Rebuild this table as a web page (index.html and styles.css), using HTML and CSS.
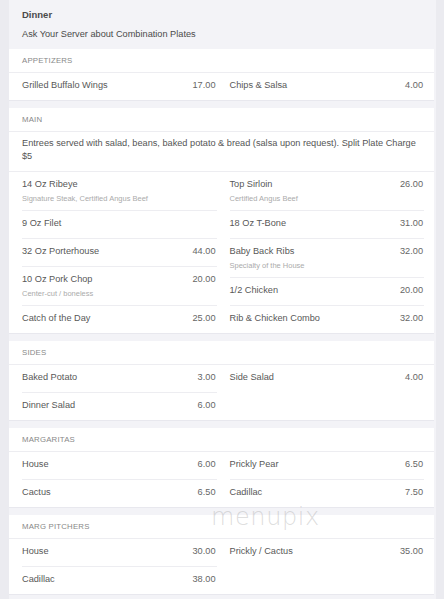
FILE: index.html
```html
<!DOCTYPE html>
<html lang="en">
<head>
  <meta charset="UTF-8" />
  <meta name="viewport" content="width=device-width, initial-scale=1.0"/>
  <title>Dinner Menu</title>
  <link rel="stylesheet" href="styles.css">
</head>
<body>
  <div class="menu">
    <header class="menu-head">
      <h1>Dinner</h1>
      <p>Ask Your Server about Combination Plates</p>
    </header>

    <section class="group">
      <h2>Appetizers</h2>
      <div class="items">
        <ul class="col">
          <li class="item"><div class="item-row"><span>Grilled Buffalo Wings</span><span class="price">17.00</span></div></li>
        </ul>
        <ul class="col">
          <li class="item"><div class="item-row"><span>Chips &amp; Salsa</span><span class="price">4.00</span></div></li>
        </ul>
      </div>
    </section>

    <section class="group">
      <h2>Main</h2>
      <p class="note">Entrees served with salad, beans, baked potato &amp; bread (salsa upon request). Split Plate Charge $5</p>
      <div class="items">
        <ul class="col">
          <li class="item">
            <div class="item-row"><span>14 Oz Ribeye</span><span class="price"></span></div>
            <div class="desc">Signature Steak, Certified Angus Beef</div>
          </li>
          <li class="item"><div class="item-row"><span>9 Oz Filet</span><span class="price"></span></div></li>
          <li class="item"><div class="item-row"><span>32 Oz Porterhouse</span><span class="price">44.00</span></div></li>
          <li class="item">
            <div class="item-row"><span>10 Oz Pork Chop</span><span class="price">20.00</span></div>
            <div class="desc">Center-cut / boneless</div>
          </li>
          <li class="item"><div class="item-row"><span>Catch of the Day</span><span class="price">25.00</span></div></li>
        </ul>
        <ul class="col">
          <li class="item">
            <div class="item-row"><span>Top Sirloin</span><span class="price">26.00</span></div>
            <div class="desc">Certified Angus Beef</div>
          </li>
          <li class="item"><div class="item-row"><span>18 Oz T-Bone</span><span class="price">31.00</span></div></li>
          <li class="item">
            <div class="item-row"><span>Baby Back Ribs</span><span class="price">32.00</span></div>
            <div class="desc">Specialty of the House</div>
          </li>
          <li class="item"><div class="item-row"><span>1/2 Chicken</span><span class="price">20.00</span></div></li>
          <li class="item"><div class="item-row"><span>Rib &amp; Chicken Combo</span><span class="price">32.00</span></div></li>
        </ul>
      </div>
    </section>

    <section class="group">
      <h2>Sides</h2>
      <div class="items">
        <ul class="col">
          <li class="item"><div class="item-row"><span>Baked Potato</span><span class="price">3.00</span></div></li>
          <li class="item"><div class="item-row"><span>Dinner Salad</span><span class="price">6.00</span></div></li>
        </ul>
        <ul class="col">
          <li class="item"><div class="item-row"><span>Side Salad</span><span class="price">4.00</span></div></li>
        </ul>
      </div>
    </section>

    <section class="group">
      <h2>Margaritas</h2>
      <div class="items">
        <ul class="col">
          <li class="item"><div class="item-row"><span>House</span><span class="price">6.00</span></div></li>
          <li class="item"><div class="item-row"><span>Cactus</span><span class="price">6.50</span></div></li>
        </ul>
        <ul class="col">
          <li class="item"><div class="item-row"><span>Prickly Pear</span><span class="price">6.50</span></div></li>
          <li class="item"><div class="item-row"><span>Cadillac</span><span class="price">7.50</span></div></li>
        </ul>
      </div>
    </section>

    <section class="group">
      <h2>Marg Pitchers</h2>
      <div class="items">
        <ul class="col">
          <li class="item"><div class="item-row"><span>House</span><span class="price">30.00</span></div></li>
          <li class="item"><div class="item-row"><span>Cadillac</span><span class="price">38.00</span></div></li>
        </ul>
        <ul class="col">
          <li class="item"><div class="item-row"><span>Prickly / Cactus</span><span class="price">35.00</span></div></li>
        </ul>
      </div>
    </section>

    <div class="watermark">menupix</div>
  </div>
</body>
</html>
```

FILE: styles.css
```css
body {
  margin: 0;
  background: #ebebf0;
  font-family: "Liberation Sans", Arial, sans-serif;
}

.menu {
  position: relative;
  margin: 0 8px 0 9px;
  min-height: 599px;
  background: #f3f3f7;
  overflow: hidden;
}

.menu-head {
  padding: 9px 13px 9px;
}

.menu-head h1 {
  margin: 0;
  font-size: 9.5px;
  line-height: 12px;
  font-weight: bold;
  color: #4a4a4a;
}

.menu-head p {
  margin: 7px 0 0;
  font-size: 9.2px;
  line-height: 12px;
  color: #4a4a4a;
}

.group {
  background: #fff;
  margin-right: 2px;
  margin-bottom: 7px;
  border-bottom: 1px solid #e8e8ee;
}

.group h2 {
  margin: 0;
  padding: 6px 13px;
  font-size: 7.8px;
  line-height: 11px;
  font-weight: normal;
  letter-spacing: 0.2px;
  text-transform: uppercase;
  color: #888;
  border-bottom: 1px solid #ededf1;
}

.note {
  margin: 0;
  padding: 5px 13px 8px;
  font-size: 9.2px;
  line-height: 13px;
  color: #555;
  border-bottom: 1px solid #ededf1;
}

.items {
  display: grid;
  grid-template-columns: 1fr 1fr;
  column-gap: 13px;
  padding: 0 10px 0 13px;
}

.col {
  list-style: none;
  margin: 0;
  padding: 0;
}

.item {
  padding: 6px 0 9px;
  border-bottom: 1px solid #ededf1;
}

.item:last-child {
  border-bottom: 0;
}

.item-row {
  display: flex;
  justify-content: space-between;
  font-size: 9.2px;
  line-height: 12px;
  color: #585858;
}

.price {
  color: #666;
  padding-right: 1px;
}

.desc {
  margin: 3px 0 -3px;
  font-size: 7.5px;
  line-height: 11px;
  color: #ababab;
}

.watermark {
  position: absolute;
  left: 202px;
  top: 503px;
  font-family: "DejaVu Sans", sans-serif;
  font-weight: 200;
  font-size: 24px;
  letter-spacing: 0.6px;
  color: rgba(170, 170, 170, 0.4);
  pointer-events: none;
}
```
